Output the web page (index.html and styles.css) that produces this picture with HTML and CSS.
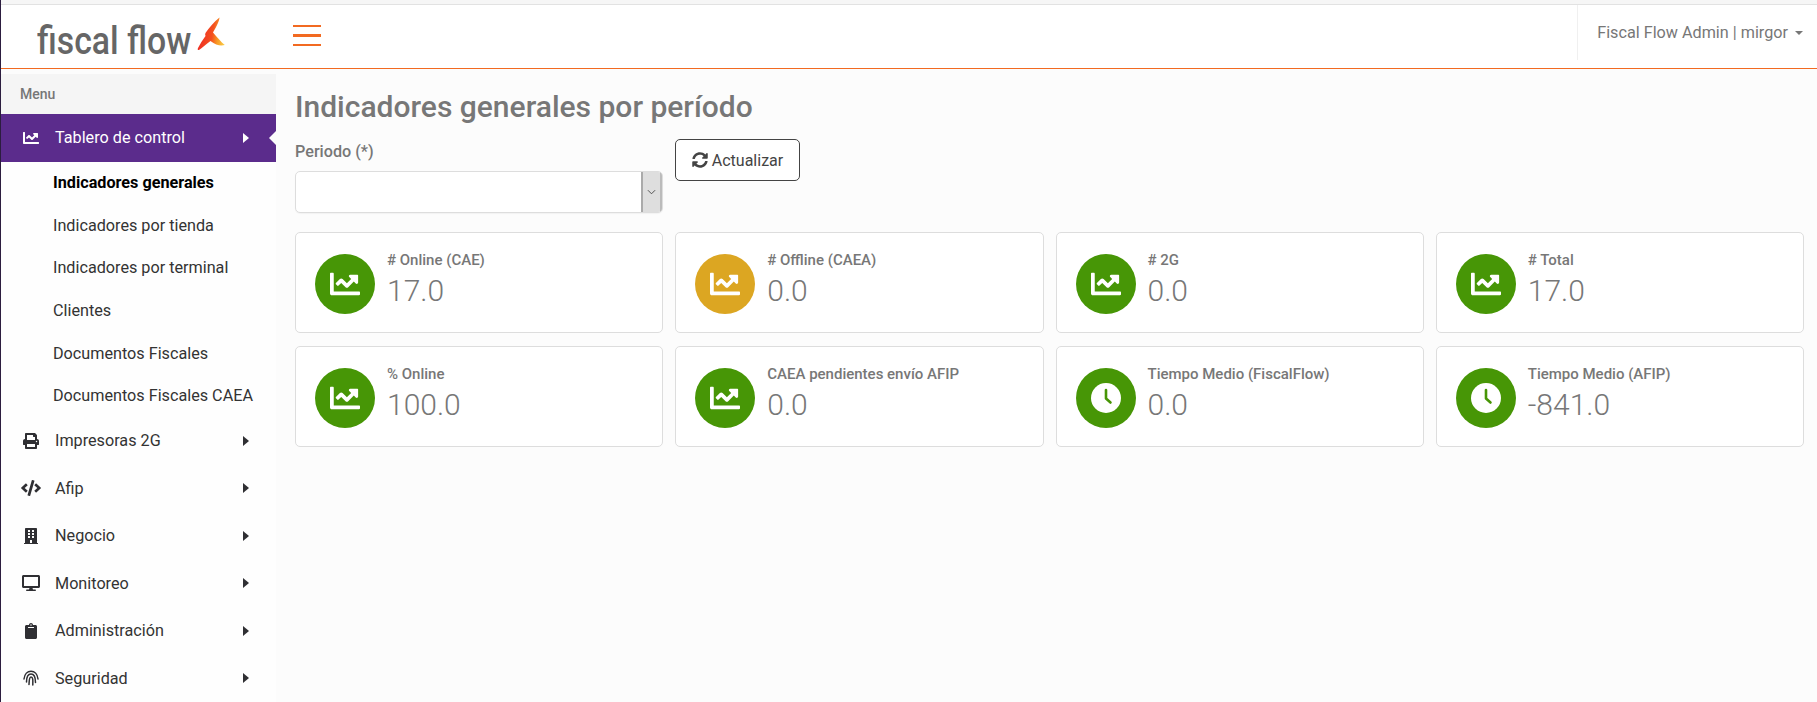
FILE: index.html
```html
<!DOCTYPE html>
<html lang="en">

<head>
  <meta charset="UTF-8">
  <meta name="viewport" content="width=device-width, initial-scale=1.0">
  <title>Fiscal Flow</title>
  <link rel="stylesheet" href="styles.css">
</head>

<body>
  <svg class="sprite" xmlns="http://www.w3.org/2000/svg">
    <symbol id="i-chart" viewBox="0 0 512 512"><path d="M496 384H64V80c0-8.84-7.16-16-16-16H16C7.16 64 0 71.16 0 80v336c0 17.67 14.33 32 32 32h464c8.84 0 16-7.16 16-16v-32c0-8.84-7.16-16-16-16zM464 96H345.94c-21.38 0-32.09 25.85-16.97 40.97l32.4 32.4L288 242.75l-73.37-73.37c-12.5-12.5-32.76-12.5-45.25 0l-68.69 68.69c-6.25 6.25-6.25 16.38 0 22.63l22.62 22.62c6.25 6.25 16.38 6.25 22.63 0L192 237.25l73.37 73.37c12.5 12.5 32.76 12.5 45.25 0l96-96 32.4 32.4c15.12 15.12 40.97 4.41 40.97-16.97V112c.01-8.84-7.15-16-15.99-16z"/></symbol>
    <symbol id="i-clock" viewBox="0 0 30 30"><circle cx="15" cy="15" r="15" fill="#fff"/><path d="M15 7v8.500l4.500 4" fill="none" stroke="#479606" stroke-width="2.600" stroke-linecap="round" stroke-linejoin="round"/></symbol>
    <symbol id="i-print" viewBox="0 0 512 512"><path d="M448 192V77.25c0-8.49-3.37-16.62-9.37-22.63L393.37 9.37c-6-6-14.14-9.37-22.63-9.37H96C78.33 0 64 14.33 64 32v160c-35.35 0-64 28.65-64 64v112c0 8.84 7.16 16 16 16h48v96c0 17.67 14.33 32 32 32h320c17.67 0 32-14.33 32-32v-96h48c8.84 0 16-7.16 16-16V256c0-35.35-28.65-64-64-64zm-64 256H128v-96h256v96zm0-224H128V64h192v48c0 8.84 7.16 16 16 16h48v96zm48 72c-13.25 0-24-10.75-24-24 0-13.26 10.75-24 24-24s24 10.74 24 24c0 13.25-10.75 24-24 24z"/></symbol>
    <symbol id="i-code" viewBox="0 0 640 512"><path d="M278.9 511.5l-61-17.7c-6.4-1.8-10-8.5-8.2-14.9L346.2 8.7c1.8-6.4 8.5-10 14.9-8.2l61 17.7c6.4 1.8 10 8.5 8.2 14.9L293.8 503.3c-1.9 6.4-8.5 10.1-14.9 8.2zm-114-112.2l43.5-46.4c4.6-4.9 4.3-12.7-.8-17.2L117 256l90.6-79.7c5.1-4.5 5.5-12.3.8-17.2l-43.5-46.4c-4.5-4.8-12.1-5.1-17-.5L3.8 247.2c-5.1 4.7-5.1 12.8 0 17.5l144.1 135.1c4.9 4.6 12.5 4.4 17-.5zm327.2.6l144.1-135.1c5.1-4.7 5.1-12.8 0-17.5L492.1 112.1c-4.8-4.5-12.4-4.3-17 .5L431.6 159c-4.6 4.9-4.3 12.7.8 17.2L523 256l-90.6 79.7c-5.1 4.5-5.5 12.3-.8 17.2l43.5 46.4c4.5 4.9 12.1 5.1 17 .6z"/></symbol>
    <symbol id="i-building" viewBox="0 0 448 512"><path d="M436 480h-20V24c0-13.255-10.745-24-24-24H56C42.745 0 32 10.745 32 24v456H12c-6.627 0-12 5.373-12 12v20h448v-20c0-6.627-5.373-12-12-12zM128 76c0-6.627 5.373-12 12-12h40c6.627 0 12 5.373 12 12v40c0 6.627-5.373 12-12 12h-40c-6.627 0-12-5.373-12-12V76zm0 96c0-6.627 5.373-12 12-12h40c6.627 0 12 5.373 12 12v40c0 6.627-5.373 12-12 12h-40c-6.627 0-12-5.373-12-12v-40zm52 148h-40c-6.627 0-12-5.373-12-12v-40c0-6.627 5.373-12 12-12h40c6.627 0 12 5.373 12 12v40c0 6.627-5.373 12-12 12zm76 160h-64v-84c0-6.627 5.373-12 12-12h40c6.627 0 12 5.373 12 12v84zm64-172c0 6.627-5.373 12-12 12h-40c-6.627 0-12-5.373-12-12v-40c0-6.627 5.373-12 12-12h40c6.627 0 12 5.373 12 12v40zm0-96c0 6.627-5.373 12-12 12h-40c-6.627 0-12-5.373-12-12v-40c0-6.627 5.373-12 12-12h40c6.627 0 12 5.373 12 12v40zm0-96c0 6.627-5.373 12-12 12h-40c-6.627 0-12-5.373-12-12V76c0-6.627 5.373-12 12-12h40c6.627 0 12 5.373 12 12v40z"/></symbol>
    <symbol id="i-desktop" viewBox="0 0 576 512"><path d="M528 0H48C21.5 0 0 21.5 0 48v320c0 26.5 21.5 48 48 48h192l-16 48h-72c-13.3 0-24 10.7-24 24s10.7 24 24 24h272c13.3 0 24-10.7 24-24s-10.7-24-24-24h-72l-16-48h192c26.5 0 48-21.5 48-48V48c0-26.5-21.5-48-48-48zm-16 352H64V64h448v288z"/></symbol>
    <symbol id="i-clipboard" viewBox="0 0 384 512"><path d="M384 112v352c0 26.51-21.49 48-48 48H48c-26.51 0-48-21.49-48-48V112c0-26.51 21.49-48 48-48h80c0-35.29 28.71-64 64-64s64 28.71 64 64h80c26.51 0 48 21.49 48 48zM192 40c-13.255 0-24 10.745-24 24s10.745 24 24 24 24-10.745 24-24-10.745-24-24-24m96 114v-20a6 6 0 0 0-6-6H102a6 6 0 0 0-6 6v20a6 6 0 0 0 6 6h180a6 6 0 0 0 6-6z"/></symbol>
    <symbol id="i-finger" viewBox="0 0 16 16"><g fill="none" stroke="currentColor" stroke-width="1.500" stroke-linecap="round"><path d="M1 9C1.500 4 4.500 1.200 8 1.200S14.500 4 15 9"/><path d="M3.500 12C3.500 7 5 4 8 4s4.500 3 4.500 8.500"/><path d="M6 14.500C6.300 11 6 7 8 7s2 3 1.800 8"/></g></symbol>
    <symbol id="i-sync" viewBox="0 0 512 512"><path d="M370.72 133.28C339.458 104.008 298.888 87.962 255.848 88c-77.458.068-144.328 53.178-162.791 126.85-1.344 5.363-6.122 9.15-11.651 9.15H24.103c-7.498 0-13.194-6.807-11.807-14.176C33.933 94.924 134.813 8 256 8c66.448 0 126.791 26.136 171.315 68.685L463.03 40.97C478.149 25.851 504 36.559 504 57.941V192c0 13.255-10.745 24-24 24H345.941c-21.382 0-32.09-25.851-16.971-40.971l41.75-41.749zM32 296h134.059c21.382 0 32.09 25.851 16.971 40.971l-41.75 41.75c31.262 29.273 71.835 45.319 114.876 45.28 77.418-.07 144.315-53.144 162.787-126.849 1.344-5.363 6.122-9.15 11.651-9.15h57.304c7.498 0 13.194 6.807 11.807 14.176C478.067 417.076 377.187 504 256 504c-66.448 0-126.791-26.136-171.315-68.685L48.97 471.03C33.851 486.149 8 475.441 8 454.059V320c0-13.255 10.745-24 24-24z"/></symbol>
  </svg>

  <div class="top-strip"></div>

  <header class="topbar">
    <div class="brand">
      <span class="brand-name">fiscal flow</span>
      <svg class="brand-mark" viewBox="0 0 28 34">
        <defs>
          <linearGradient id="mark" x1="0" y1="0.6" x2="1" y2="0.8">
            <stop offset="0" stop-color="#ee2a25" />
            <stop offset="0.5" stop-color="#f4501f" />
            <stop offset="0.72" stop-color="#f79a24" />
            <stop offset="1" stop-color="#fad04a" />
          </linearGradient>
        </defs>
        <path fill="url(#mark)" d="M22.500 0.500 C22.500 3 20 9 16 15.500 C20 20 24 25 27.800 28 C24 29 19 28.500 13.500 24 C9 27 5 31 2 33 C0.500 33.500 0.500 32 1 31 C3 27 5.500 23 8.500 19 C8 18 8 17 8.500 16 C12 11 17 5 22.500 0.500 Z" />
      </svg>
    </div>
    <button class="menu-toggle" aria-label="Menu"><span></span><span></span><span></span></button>
    <div class="user-menu">
      <span>Fiscal Flow Admin | mirgor</span>
      <i class="caret"></i>
    </div>
  </header>

  <div class="layout">
    <nav class="sidebar">
      <div class="menu-title">Menu</div>
      <a class="nav-item active" href="#">
        <svg class="nav-icon"><use href="#i-chart" /></svg>
        <span>Tablero de control</span>
        <i class="arrow"></i>
      </a>
      <div class="subnav">
        <a class="current" href="#">Indicadores generales</a>
        <a href="#">Indicadores por tienda</a>
        <a href="#">Indicadores por terminal</a>
        <a href="#">Clientes</a>
        <a href="#">Documentos Fiscales</a>
        <a href="#">Documentos Fiscales CAEA</a>
      </div>
      <a class="nav-item" href="#">
        <svg class="nav-icon"><use href="#i-print" /></svg>
        <span>Impresoras 2G</span>
        <i class="arrow"></i>
      </a>
      <a class="nav-item" href="#">
        <svg class="nav-icon wide"><use href="#i-code" /></svg>
        <span>Afip</span>
        <i class="arrow"></i>
      </a>
      <a class="nav-item" href="#">
        <svg class="nav-icon"><use href="#i-building" /></svg>
        <span>Negocio</span>
        <i class="arrow"></i>
      </a>
      <a class="nav-item" href="#">
        <svg class="nav-icon wide"><use href="#i-desktop" /></svg>
        <span>Monitoreo</span>
        <i class="arrow"></i>
      </a>
      <a class="nav-item" href="#">
        <svg class="nav-icon"><use href="#i-clipboard" /></svg>
        <span>Administración</span>
        <i class="arrow"></i>
      </a>
      <a class="nav-item" href="#">
        <svg class="nav-icon"><use href="#i-finger" /></svg>
        <span>Seguridad</span>
        <i class="arrow"></i>
      </a>
    </nav>

    <main class="content">
      <h1>Indicadores generales por período</h1>

      <div class="filters">
        <div class="field">
          <label>Periodo (*)</label>
          <div class="select">
            <span class="select-arrow">
              <svg viewBox="0 0 10 6"><path d="M1 1l4 4 4-4" fill="none" stroke="#444" stroke-width="1" /></svg>
            </span>
          </div>
        </div>
        <button class="btn-refresh">
          <svg><use href="#i-sync" /></svg>
          Actualizar
        </button>
      </div>

      <div class="cards">
        <div class="card">
          <div class="circle green"><svg><use href="#i-chart" /></svg></div>
          <div class="card-text"><h3># Online (CAE)</h3><p>17.0</p></div>
        </div>
        <div class="card">
          <div class="circle yellow"><svg><use href="#i-chart" /></svg></div>
          <div class="card-text"><h3># Offline (CAEA)</h3><p>0.0</p></div>
        </div>
        <div class="card">
          <div class="circle green"><svg><use href="#i-chart" /></svg></div>
          <div class="card-text"><h3># 2G</h3><p>0.0</p></div>
        </div>
        <div class="card">
          <div class="circle green"><svg><use href="#i-chart" /></svg></div>
          <div class="card-text"><h3># Total</h3><p>17.0</p></div>
        </div>
        <div class="card">
          <div class="circle green"><svg><use href="#i-chart" /></svg></div>
          <div class="card-text"><h3>% Online</h3><p>100.0</p></div>
        </div>
        <div class="card">
          <div class="circle green"><svg><use href="#i-chart" /></svg></div>
          <div class="card-text"><h3>CAEA pendientes envío AFIP</h3><p>0.0</p></div>
        </div>
        <div class="card">
          <div class="circle green"><svg><use href="#i-clock" /></svg></div>
          <div class="card-text"><h3>Tiempo Medio (FiscalFlow)</h3><p>0.0</p></div>
        </div>
        <div class="card">
          <div class="circle green"><svg><use href="#i-clock" /></svg></div>
          <div class="card-text"><h3>Tiempo Medio (AFIP)</h3><p>-841.0</p></div>
        </div>
      </div>
    </main>
  </div>
</body>

</html>
```

FILE: styles.css
```css
* {
  box-sizing: border-box;
  margin: 0;
  padding: 0;
}

body {
  font-family: Roboto, Arial, sans-serif;
  background: #fcfcfc;
  color: #777;
  height: 702px;
  overflow: hidden;
  border-left: 1px solid #2c1d3f;
}

a {
  text-decoration: none;
}

.sprite {
  display: none;
}

svg {
  fill: currentColor;
}

.top-strip {
  height: 5px;
  background: #f6f6f6;
  border-bottom: 1px solid #e2e2e2;
}

/* Top bar */
.topbar {
  display: flex;
  align-items: center;
  height: 64px;
  background: #fff;
  border-bottom: 1.5px solid #f26a21;
}

.brand {
  width: 275px;
  padding-left: 36px;
  display: flex;
  align-items: flex-start;
  height: 100%;
}

.brand-name {
  font-size: 38px;
  font-weight: 500;
  line-height: 38px;
  margin-top: 17px;
  color: #666;
  width: 160px;
  white-space: nowrap;
  transform: scaleX(0.89);
  transform-origin: left;
}

.brand-mark {
  width: 28px;
  height: 34px;
  margin-top: 12px;
}

.menu-toggle {
  width: 28px;
  margin-left: 17px;
  margin-bottom: 2px;
  display: flex;
  flex-direction: column;
  gap: 7px;
  background: none;
  border: none;
}

.menu-toggle span {
  display: block;
  height: 2.5px;
  background: #f26a21;
}

.user-menu {
  margin-left: auto;
  height: 55px;
  margin-bottom: 8px;
  padding: 0 14px 0 19px;
  display: flex;
  align-items: center;
  gap: 7px;
  border-left: 1px solid #f0f0f0;
  font-size: 16.200px;
  color: #777;
}

.caret {
  width: 0;
  height: 0;
  border-left: 4.500px solid transparent;
  border-right: 4.500px solid transparent;
  border-top: 4.500px solid #777;
}

/* Layout */
.layout {
  display: flex;
}

.sidebar {
  width: 275px;
  height: 640px;
  margin-top: 5px;
  background: #fefefe;
  flex-shrink: 0;
}

.menu-title {
  height: 40px;
  line-height: 41px;
  padding-left: 19px;
  background: #f5f5f5;
  font-size: 14px;
  font-weight: 500;
  color: #777;
}

.nav-item {
  position: relative;
  display: flex;
  align-items: center;
  height: 47.500px;
  padding-left: 22px;
  font-size: 16.200px;
  color: #333;
}

.nav-item span {
  margin-left: 16px;
}

.nav-icon {
  width: 16px;
  height: 16px;
  flex-shrink: 0;
  color: #2f2f33;
}

.nav-icon.wide {
  width: 20px;
  margin-left: -2px;
  margin-right: -2px;
}

.arrow {
  position: absolute;
  left: 242px;
  top: 50%;
  margin-top: -5px;
  width: 0;
  height: 0;
  border-top: 5px solid transparent;
  border-bottom: 5px solid transparent;
  border-left: 6px solid #2f2f33;
}

.nav-item.active {
  background: #5b2c8c;
  color: #fff;
}

.nav-item.active .nav-icon {
  color: #fff;
}

.nav-item.active .arrow {
  border-left-color: #fff;
}

.nav-item.active::after {
  content: "";
  position: absolute;
  right: 0;
  top: 50%;
  margin-top: -7px;
  width: 0;
  height: 0;
  border-top: 7px solid transparent;
  border-bottom: 7px solid transparent;
  border-right: 7px solid #fcfcfc;
}

.subnav a {
  display: flex;
  align-items: center;
  height: 42.600px;
  padding-left: 52px;
  font-size: 16.200px;
  color: #333;
}

.subnav a.current {
  font-weight: 700;
  color: #000;
}

/* Content */
.content {
  flex: 1;
  padding: 20px 13px 0 19px;
}

h1 {
  font-size: 30px;
  line-height: 36px;
  font-weight: 500;
  color: #777;
}

.filters {
  display: flex;
  gap: 12px;
  margin-top: 14px;
}

.field {
  width: 368px;
}

.field label {
  display: block;
  font-size: 16.200px;
  font-weight: 500;
  line-height: 20px;
  margin-top: 2.500px;
  color: #777;
}

.select {
  height: 42px;
  margin-top: 9.500px;
  display: flex;
  justify-content: flex-end;
  background: #fff;
  border: 1px solid #ddd;
  border-radius: 5px;
  box-shadow: 0 1px 1px rgba(0, 0, 0, 0.04);
  overflow: hidden;
}

.select-arrow {
  width: 21px;
  display: flex;
  align-items: center;
  justify-content: center;
  background: #dedede;
  border-left: 2px solid #aaa;
  border-right: 2px solid #bbb;
}

.select-arrow svg {
  width: 9px;
  height: 6px;
}

.btn-refresh {
  height: 42px;
  width: 125px;
  display: flex;
  align-items: center;
  justify-content: center;
  gap: 4px;
  background: #fff;
  border: 1px solid #444;
  border-radius: 5px;
  font-family: inherit;
  font-size: 16px;
  color: #444;
}

.btn-refresh svg {
  width: 16px;
  height: 16px;
}

.cards {
  display: grid;
  grid-template-columns: repeat(4, 1fr);
  gap: 13.500px 12px;
  margin-top: 19px;
}

.card {
  height: 100.500px;
  padding: 21px 19px;
  display: flex;
  gap: 12px;
  background: #fff;
  border: 1px solid #ddd;
  border-radius: 5px;
}

.circle {
  width: 60px;
  height: 60px;
  border-radius: 50%;
  flex-shrink: 0;
  display: flex;
  align-items: center;
  justify-content: center;
  color: #fff;
}

.circle svg {
  width: 30px;
  height: 30px;
}

.green {
  background: #479606;
}

.yellow {
  background: #dca622;
}

.card-text {
  margin-top: -2px;
}

.card-text h3 {
  font-size: 15px;
  line-height: 16px;
  font-weight: 500;
  color: #777;
}

.card-text p {
  font-size: 30px;
  line-height: 36px;
  margin-top: 5px;
  font-weight: 300;
  color: #777;
}
```
